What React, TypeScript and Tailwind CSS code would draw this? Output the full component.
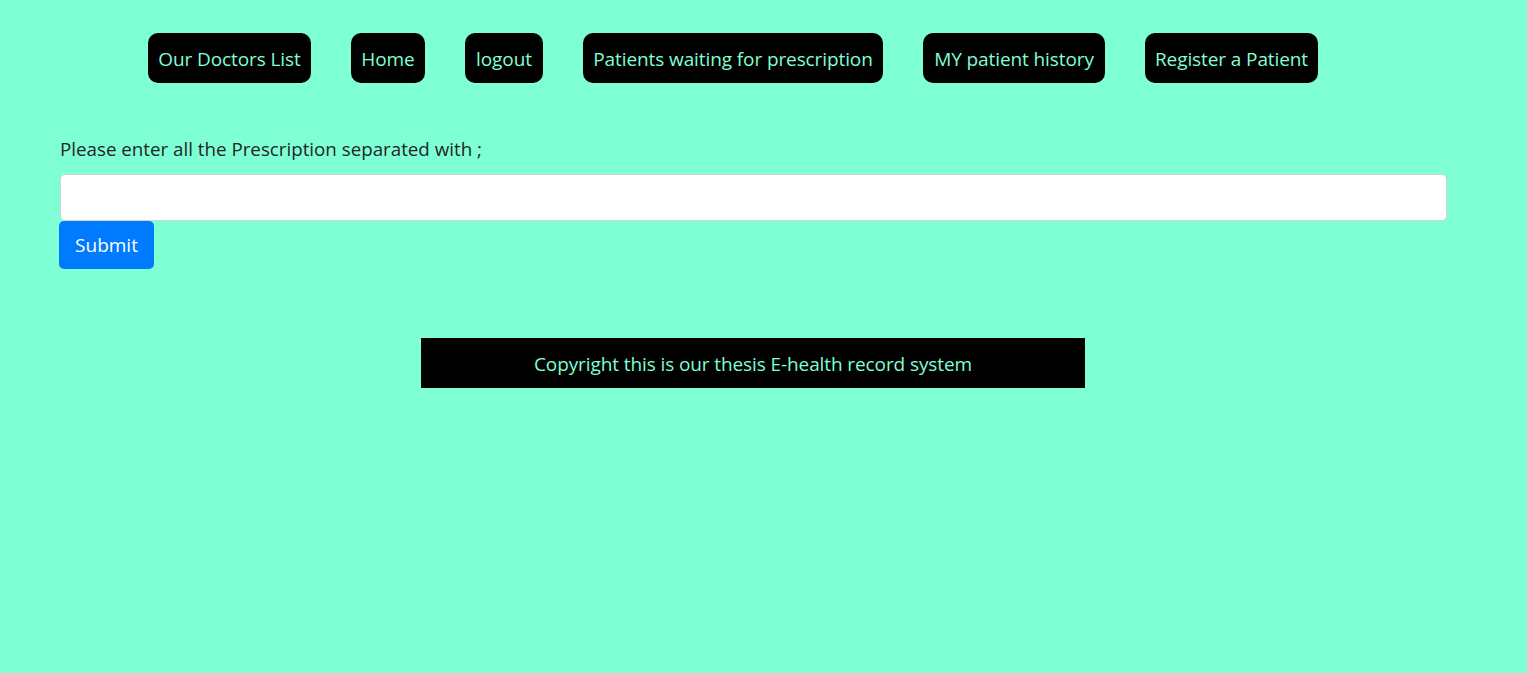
const navItems = [
  { label: "Our Doctors List", w: "w-[163px]" },
  { label: "Home", w: "w-[74px]" },
  { label: "logout", w: "w-[78px]" },
  { label: "Patients waiting for prescription", w: "w-[300px]" },
  { label: "MY patient history", w: "w-[182px]" },
  { label: "Register a Patient", w: "w-[173px]" },
];

export default function App() {
  return (
    <div className="min-h-[673px] w-full bg-[#7fffd4] font-['Open_Sans',sans-serif] text-[#212529]">
      <nav className="flex gap-[40px] pl-[148px] pt-[33px]">
        {navItems.map((item) => (
          <a
            key={item.label}
            href="#"
            className={`flex h-[50px] ${item.w} items-center justify-center rounded-[10px] bg-black pt-[2px] text-[19px] tracking-[-0.1px] text-[#7fffd4] whitespace-nowrap`}
          >
            {item.label}
          </a>
        ))}
      </nav>

      <form className="mt-[54px] pl-[59px] pr-[80px]" onSubmit={(e) => e.preventDefault()}>
        <label className="block pl-[1px] text-[18.75px] leading-[24px]">
          Please enter all the Prescription separated with ;
        </label>
        <input
          type="text"
          className="mt-[13px] ml-[1px] block h-[47px] w-[1387px] rounded-[5px] border border-[#ced4da] bg-white px-3 text-[18px] outline-none"
        />
        <button
          type="submit"
          className="block h-[48px] w-[95px] rounded-[5px] bg-[#007bff] text-[19px] text-white"
        >
          Submit
        </button>
      </form>

      <footer className="mt-[69px] ml-[421px] flex h-[50px] w-[664px] items-center justify-center bg-black pt-[2px] text-[19px] tracking-[-0.1px] text-[#7fffd4]">
        Copyright this is our thesis E-health record system
      </footer>
    </div>
  );
}
